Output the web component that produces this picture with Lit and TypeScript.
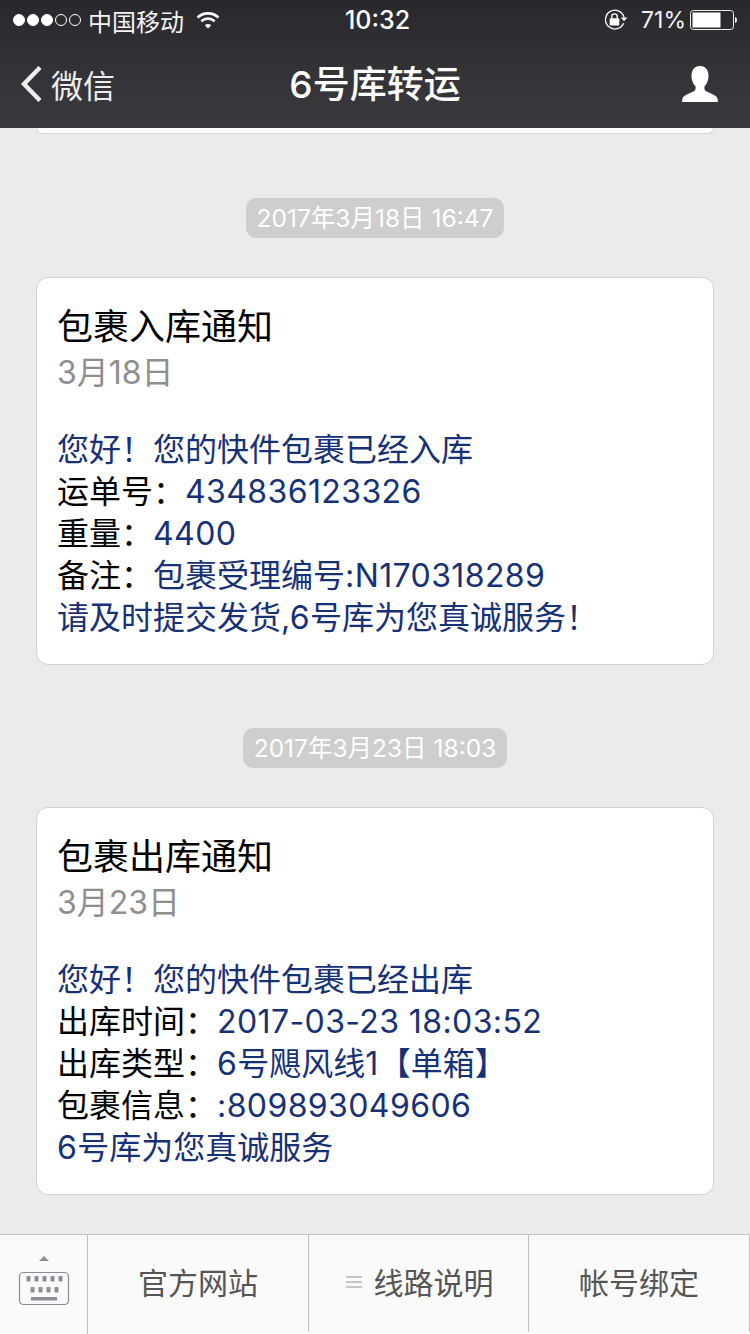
import { LitElement, html, svg, css } from "lit";
import { customElement } from "lit/decorators.js";

const notices = [
  {
    time: "2017年3月18日 16:47",
    title: "包裹入库通知",
    date: "3月18日",
    lines: [
      ["", "您好！您的快件包裹已经入库"],
      ["运单号：", "434836123326"],
      ["重量：", "4400"],
      ["备注：", "包裹受理编号:N170318289"],
      ["", "请及时提交发货,6号库为您真诚服务！"],
    ],
  },
  {
    time: "2017年3月23日 18:03",
    title: "包裹出库通知",
    date: "3月23日",
    lines: [
      ["", "您好！您的快件包裹已经出库"],
      ["出库时间：", "2017-03-23 18:03:52"],
      ["出库类型：", "6号飓风线1【单箱】"],
      ["包裹信息：", ":809893049606"],
      ["", "6号库为您真诚服务"],
    ],
  },
];

const runs = (text: string) =>
  text
    .split(/([\x21-\x7e ]+)/)
    .map((part, i) => (i % 2 ? html`<span class="n">${part}</span>` : part));

@customElement("app-root")
export class AppRoot extends LitElement {
  static styles = css`
    :host {
      display: block;
      width: 750px;
      height: 1334px;
      overflow: hidden;
      font-family: Inter, "Noto Sans CJK SC", sans-serif;
      background: #ebebeb;
    }
    .page { display: flex; flex-direction: column; height: 1334px; }
    .top {
      height: 128px;
      flex: none;
      color: #fff;
      background: linear-gradient(#28282d, #3a3a3f);
    }
    .status {
      height: 40px;
      display: flex;
      align-items: center;
      padding: 0 13px 0 13px;
      font-size: 24px;
      position: relative;
    }
    .dots { display: flex; gap: 2px; margin-right: 7px; }
    .dot { width: 12px; height: 12px; border-radius: 50%; border: 1px solid #fff; box-sizing: border-box; }
    .dot.on { background: #fff; }
    .carrier { margin-right: 12px; color: #f4f4f4; }
    .clock {
      position: absolute;
      left: 5px; right: 0;
      text-align: center;
      font-size: 25px;
      font-weight: 500;
    }
    .spacer { flex: 1; }
    .pct { margin: 0 4px 0 13px; font-size: 23px; color: #f4f4f4; }
    .nav {
      height: 88px;
      display: flex;
      align-items: center;
      padding: 0 32px 8px 20px;
      position: relative;
    }
    .back { display: flex; align-items: center; gap: 7px; font-size: 32px; color: #eee; }
    .title {
      position: absolute;
      left: 0; right: 0;
      top: 24px;
      text-align: center;
      font-size: 37px;
      line-height: 42px;
      font-weight: 500;
    }
    main { flex: 1; overflow: hidden; padding: 0 36px; }
    .stub {
      height: 5px;
      background: #fff;
      border: 1px solid #d2d2d2;
      border-top: none;
      border-radius: 0 0 12px 12px;
      margin-bottom: 64px;
    }
    .stamp { display: flex; justify-content: center; margin-bottom: 39px; }
    .stamp span {
      height: 40px;
      line-height: 40px;
      padding: 0 11px;
      border-radius: 10px;
      background: #cecece;
      color: #fff;
      font-size: 24.5px;
      white-space: nowrap;
    }
    .card {
      height: 388px;
      box-sizing: border-box;
      background: #fff;
      border: 1px solid #d2d2d2;
      border-radius: 12px;
      padding: 26px 20px 0;
      margin-bottom: 63px;
    }
    .card h2 {
      margin: 0;
      font-size: 36px;
      line-height: 46px;
      font-weight: 400;
      color: #000;
    }
    .date { font-size: 32px; line-height: 44px; color: #8e8e8e; margin: 1px 0 34px; }
    .line { font-size: 32px; line-height: 42px; color: #000; white-space: nowrap; }
    .line b { font-weight: 400; color: #173177; }
    .n { letter-spacing: 0.4px; }
    .bar {
      flex: none;
      height: 100px;
      box-sizing: border-box;
      border-top: 1px solid #c4c4c4;
      background: #fafafa;
      display: flex;
      align-items: flex-start;
    }
    .kbd {
      width: 88px;
      height: 99px;
      box-sizing: border-box;
      border-right: 1px solid #c0c0c0;
      display: flex;
      flex-direction: column;
      align-items: center;
      padding-top: 21px;
      flex: none;
    }
    .item {
      height: 97px;
      box-sizing: border-box;
      border-right: 1px solid #c0c0c0;
      display: flex;
      align-items: center;
      justify-content: center;
      padding-bottom: 6px;
      font-size: 30px;
      color: #555;
      gap: 12px;
      flex: 1;
    }
    .i1 { flex: 0 0 221px; }
    .i2 { flex: 0 0 220px; padding-left: 2px; }
    .i2 svg { margin-top: 2px; }
    .i3 { flex: 0 0 221px; }
    svg { display: block; flex: none; }
  `;

  render() {
    return html`<div class="page">
      <header class="top">
        <div class="status">
          <div class="dots">
            <i class="dot on"></i><i class="dot on"></i><i class="dot on"></i><i class="dot"></i><i class="dot"></i>
          </div>
          <span class="carrier">中国移动</span>
          <svg width="24" height="18" viewBox="0 0 24 18" fill="none" stroke="#fff" stroke-width="2.6">
            <path d="M1.500 6.500C7.500 1 16.500 1 22.500 6.500" />
            <path d="M5.300 10.200C9.200 6.800 14.800 6.800 18.700 10.200" />
            <path d="M12 17.500L8.800 14.200Q12 11.800 15.200 14.200Z" fill="#fff" stroke="none" />
          </svg>
          <div class="clock">10:32</div>
          <div class="spacer"></div>
          <svg width="24" height="22" viewBox="0 0 24 22" fill="none">
            <path d="M20 8.200A9.400 9.400 0 1 0 19.600 14.200" stroke="#fff" stroke-width="1.300" />
            <path d="M16.800 8.600H23.400L20.100 12.200Z" fill="#fff" />
            <rect x="5.700" y="9.200" width="9.600" height="7.200" rx="1" fill="#fff" />
            <path d="M7.800 9.500V7.600A2.700 2.700 0 0 1 13.200 7.600V9.500" stroke="#fff" stroke-width="1.400" />
          </svg>
          <span class="pct">71%</span>
          <svg width="47" height="20" viewBox="0 0 47 20" fill="none">
            <rect x="0.500" y="0.500" width="43" height="19" rx="3" stroke="#eee" />
            <rect x="2.500" y="2.500" width="28" height="15" fill="#fff" />
            <path d="M45 7C46.500 7.500 47 8.500 47 10S46.500 12.500 45 13Z" fill="#eee" />
          </svg>
        </div>
        <div class="nav">
          <div class="back">
            <svg width="24" height="38" viewBox="0 0 24 38" fill="none" stroke="#eee" stroke-width="4.400">
              <path d="M20 2.500L4 19L20 35.500" />
            </svg>
            <span>微信</span>
          </div>
          <div class="title">6号库转运</div>
          <div class="spacer"></div>
          <svg width="36" height="36" viewBox="0 0 38 36" preserveAspectRatio="none" fill="#fff">
            <path d="M19 0C12.600 0 10 4.800 10 10C10 14.500 11.800 18.200 14.300 20.400C14.800 23.300 13.600 24.800 10.800 26C6 28 1.500 29.500 0.500 32.500L0 36H38L37.500 32.500C36.500 29.500 32 28 27.200 26C24.400 24.800 23.200 23.300 23.700 20.400C26.200 18.200 28 14.500 28 10C28 4.800 25.400 0 19 0Z" />
          </svg>
        </div>
      </header>
      <main>
        <div class="stub"></div>
        ${notices.map(
          (n) => html`
            <div class="stamp"><span>${n.time}</span></div>
            <section class="card">
              <h2>${n.title}</h2>
              <div class="date">${n.date}</div>
              ${n.lines.map(([k, v]) => html`<div class="line">${k}<b>${runs(v)}</b></div>`)}
            </section>
          `
        )}
      </main>
      <footer class="bar">
        <div class="kbd">
          <svg width="52" height="50" viewBox="0 0 52 50" fill="#8a8e96">
            <path d="M26 0L31 5H21Z" />
            <rect x="1.500" y="16.500" width="49" height="32" rx="4" fill="none" stroke="#8a8e96" stroke-width="1.200" />
            ${[0, 1, 2, 3, 4].map((i) => svg`<rect x="${8.5 + i * 8}" y="20" width="4" height="5.500" rx="1" />`)}
            ${[0, 1, 2, 3].map((i) => svg`<rect x="${12.5 + i * 8}" y="31" width="4" height="5.500" rx="1" />`)}
            <rect x="13" y="41" width="26" height="3.500" rx="0.500" />
          </svg>
        </div>
        <div class="item i1">官方网站</div>
        <div class="item i2">
          <svg width="16" height="12" viewBox="0 0 16 12" stroke="#b4b4b4" stroke-width="1.500">
            <path d="M0 1H16M0 6H16M0 11H16" />
          </svg>
          <span>线路说明</span>
        </div>
        <div class="item i3">帐号绑定</div>
      </footer>
    </div>`;
  }
}
